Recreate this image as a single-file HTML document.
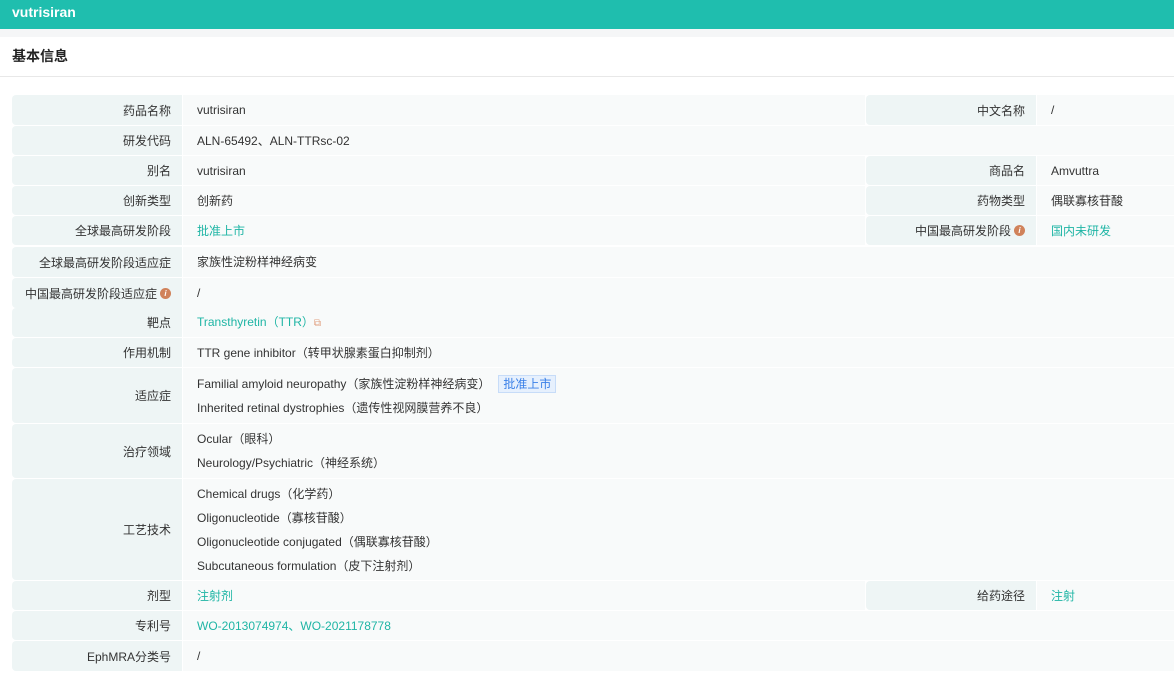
<!DOCTYPE html>
<html><head><meta charset="utf-8"><style>
*{margin:0;padding:0;box-sizing:border-box}
body{width:1174px;height:688px;background:#fff;font-family:"Liberation Sans","Noto Sans CJK SC",sans-serif;font-size:12px;color:#333;position:relative;overflow:hidden}
.hd{position:absolute;left:0;top:0;width:1174px;height:29px;background:#1fbeae;color:#fff;font-weight:bold;font-size:14px;padding:2px 12px;line-height:20px}
.gap{position:absolute;left:0;top:29px;width:1174px;height:8px;background:#f5f6f7}
.tt{position:absolute;left:12px;top:46px;font-size:14px;font-weight:bold;color:#222}
.ln{position:absolute;left:0;top:76px;width:1174px;height:1px;background:#e8e8e8}
.r{position:absolute;left:12px;width:1162px}
.l{position:absolute;left:0;top:0;bottom:0;width:170px;background:#eef5f5;border-radius:4px 0 0 4px;text-align:right;padding-right:11px;display:flex;align-items:center;justify-content:flex-end}
.v{position:absolute;left:171px;top:0;bottom:0;right:0;background:#f8fafa;padding-left:14px;display:flex;flex-direction:column;justify-content:center;line-height:24px}
.v.h{right:309px}
.l2{position:absolute;left:854px;top:0;bottom:0;width:170px;background:#eef5f5;border-radius:4px 0 0 4px;padding-right:11px;display:flex;align-items:center;justify-content:flex-end}
.v2{position:absolute;left:1025px;top:0;bottom:0;right:0;background:#f8fafa;padding-left:14px;display:flex;align-items:center}
.g{color:#1fb5a5}
.i{display:inline-block;width:11px;height:11px;border-radius:50%;background:#d0825a;color:#fff;font-size:8px;line-height:11px;text-align:center;font-style:italic;margin-left:3px;font-weight:bold}
.tag{display:inline-block;background:#e6f0fd;border:1px solid #c7dcf8;color:#3a80e8;padding:0 4px;line-height:16px;margin-left:8px}
</style></head><body>
<div class="hd">vutrisiran</div><div class="gap"></div>
<div class="tt">基本信息</div><div class="ln"></div>

<div class="r" style="top:95px;height:30px"><div class="l">药品名称</div><div class="v h">vutrisiran</div><div class="l2">中文名称</div><div class="v2">/</div></div>
<div class="r" style="top:126px;height:29px"><div class="l">研发代码</div><div class="v">ALN-65492、ALN-TTRsc-02</div></div>
<div class="r" style="top:156px;height:29px"><div class="l">别名</div><div class="v h">vutrisiran</div><div class="l2">商品名</div><div class="v2">Amvuttra</div></div>
<div class="r" style="top:186px;height:29px"><div class="l">创新类型</div><div class="v h">创新药</div><div class="l2">药物类型</div><div class="v2">偶联寡核苷酸</div></div>
<div class="r" style="top:216px;height:29px"><div class="l">全球最高研发阶段</div><div class="v h g">批准上市</div><div class="l2">中国最高研发阶段<span class="i">i</span></div><div class="v2 g">国内未研发</div></div>
<div class="r" style="top:247px;height:30px"><div class="l">全球最高研发阶段适应症</div><div class="v">家族性淀粉样神经病变</div></div>
<div class="r" style="top:278px;height:30px"><div class="l">中国最高研发阶段适应症<span class="i">i</span></div><div class="v">/</div></div>
<div class="r" style="top:308px;height:29px"><div class="l">靶点</div><div class="v"><span class="g">Transthyretin（TTR）<span style="color:#e0a080;font-size:10px">&#x29C9;</span></span></div></div>
<div class="r" style="top:338px;height:29px"><div class="l">作用机制</div><div class="v">TTR gene inhibitor（转甲状腺素蛋白抑制剂）</div></div>
<div class="r" style="top:368px;height:55px"><div class="l">适应症</div><div class="v"><div>Familial amyloid neuropathy（家族性淀粉样神经病变）<span class="tag">批准上市</span></div><div>Inherited retinal dystrophies（遗传性视网膜营养不良）</div></div></div>
<div class="r" style="top:424px;height:54px"><div class="l">治疗领域</div><div class="v"><div>Ocular（眼科）</div><div>Neurology/Psychiatric（神经系统）</div></div></div>
<div class="r" style="top:479px;height:101px"><div class="l">工艺技术</div><div class="v"><div>Chemical drugs（化学药）</div><div>Oligonucleotide（寡核苷酸）</div><div>Oligonucleotide conjugated（偶联寡核苷酸）</div><div>Subcutaneous formulation（皮下注射剂）</div></div></div>
<div class="r" style="top:581px;height:29px"><div class="l">剂型</div><div class="v h g">注射剂</div><div class="l2">给药途径</div><div class="v2 g">注射</div></div>
<div class="r" style="top:611px;height:29px"><div class="l">专利号</div><div class="v g">WO-2013074974、WO-2021178778</div></div>
<div class="r" style="top:641px;height:30px"><div class="l">EphMRA分类号</div><div class="v">/</div></div>
</body></html>
